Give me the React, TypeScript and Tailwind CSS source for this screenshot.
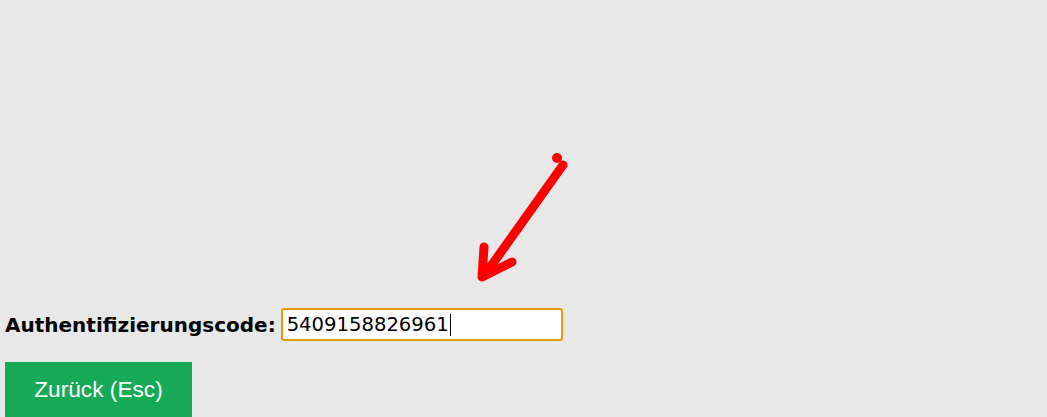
import React from "react";

export default function App() {
  return (
    <div className="relative h-[417px] w-[1047px] overflow-hidden bg-[#e8e8e8]">
      <svg
        className="absolute left-0 top-0"
        width="1047"
        height="417"
        viewBox="0 0 1047 417"
      >
        <circle cx="557" cy="158" r="5" fill="#ff0000" />
        <g stroke="#ff0000" strokeWidth="9" strokeLinecap="round" strokeLinejoin="round" fill="none">
          <path d="M563 165 L484 276" />
          <path d="M484 247 L482 277 L512 262" />
        </g>
      </svg>
      <div className="flex flex-col pl-[5px] pt-[308px]">
        <div className="flex items-center">
          <span
            className="text-[20px] font-bold text-black"
            style={{ fontFamily: '"DejaVu Sans", Verdana, sans-serif' }}
          >
            Authentifizierungscode:
          </span>
          <div className="ml-[5px] flex h-[33px] w-[282px] items-center rounded-[3px] border-2 border-[#e59a0c] bg-white pl-[4px]">
            <span
              className="text-[19.6px] text-black leading-none"
              style={{ fontFamily: '"DejaVu Sans", Verdana, sans-serif' }}
            >
              5409158826961
            </span>
            <span className="ml-[1px] inline-block h-[22px] w-[1px] bg-black" />
          </div>
        </div>
        <button
          className="mt-[21px] flex h-[56px] w-[187px] items-center justify-center bg-[#17aa56] pb-[2px] text-[22.7px] text-white"
          style={{ fontFamily: '"Liberation Sans", Arial, sans-serif' }}
        >
          Zurück (Esc)
        </button>
      </div>
    </div>
  );
}
